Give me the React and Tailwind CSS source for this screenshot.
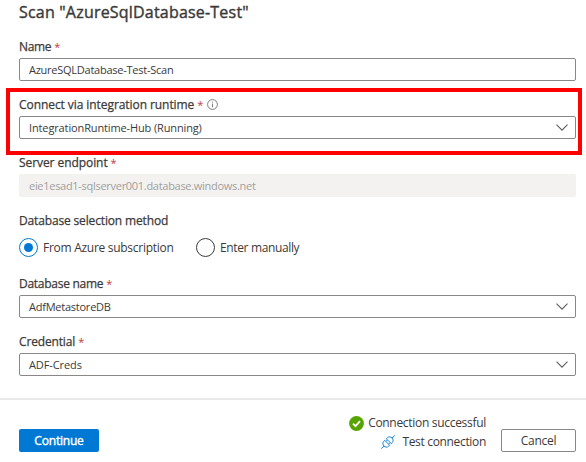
import React from 'react';

function Label({ children, required, info, spacing }) {
  return (
    <div className="flex h-5 items-center pb-[3px] text-[12px] leading-4 text-[#3b3a39]">
      <span className={`whitespace-nowrap [-webkit-text-stroke:0.25px_#3b3a39] ${spacing}`}>{children}</span>
      {required && <span className="ml-[3px] text-[11px] leading-4 text-[#c0383d]">*</span>}
      {info && (
        <svg className="ml-[4px] size-[11px]" viewBox="0 0 11 11" fill="none" stroke="#605e5c" strokeWidth="0.8">
          <circle cx="5.5" cy="5.5" r="4.9" />
          <path d="M5.5 4.6v3.6M5.5 2.6v1" />
        </svg>
      )}
    </div>
  );
}

function Chevron() {
  return (
    <svg className="mr-[7px] h-[7px] w-3 shrink-0" viewBox="0 0 12 7" fill="none" stroke="#605e5c" strokeWidth="1.1">
      <path d="M0.5 0.6L6 6.1L11.5 0.6" />
    </svg>
  );
}

function Field({ label, info, labelSpacing, value, spacing, select, disabled }) {
  const box = disabled ? 'border-[#f3f2f1] bg-[#f3f2f1] text-[#a19f9d]' : 'border-[#8a8886] bg-white text-[#3b3a39]';
  return (
    <div className="mb-[15px]">
      <Label required info={info} spacing={labelSpacing}>{label}</Label>
      <div className={`flex h-[23px] items-center justify-between rounded-[2px] border pl-[9px] text-[11px] leading-4 ${box}`}>
        <span className={`whitespace-nowrap ${spacing}`}>{value}</span>
        {select && <Chevron />}
      </div>
    </div>
  );
}

export default function App() {
  return (
    <div className="h-[462px] w-[586px] overflow-hidden bg-white font-['Open_Sans','Noto_Sans',sans-serif] text-[#3b3a39]">
      <div className="relative h-[398px] pl-[19px] pr-[10px]">
        <h1 className="h-[38px] whitespace-nowrap text-[16px] leading-6 tracking-[0.2px] [-webkit-text-stroke:0.4px_#3b3a39]">Scan "AzureSqlDatabase-Test"</h1>
        <Field label="Name" labelSpacing="tracking-[-0.35px]" value="AzureSQLDatabase-Test-Scan" spacing="tracking-[-0.25px]" />
        <Field label="Connect via integration runtime" labelSpacing="tracking-[-0.07px]" info select value="IntegrationRuntime-Hub (Running)" spacing="tracking-[-0.13px]" />
        <Field label="Server endpoint" labelSpacing="tracking-[-0.07px]" disabled value="eie1esad1-sqlserver001.database.windows.net" spacing="tracking-[-0.29px]" />
        <Label spacing="tracking-[-0.15px]">Database selection method</Label>
        <div className="flex h-[43px] items-start pt-1.5 text-[12px] leading-[19px]">
          <span className="flex size-[19px] shrink-0 items-center justify-center rounded-full border border-[#0078d4]">
            <span className="size-[9px] rounded-full bg-[#0078d4]" />
          </span>
          <span className="ml-[5px] w-[153px] whitespace-nowrap tracking-[-0.28px]">From Azure subscription</span>
          <span className="size-[19px] shrink-0 rounded-full border border-[#3b3a39]" />
          <span className="ml-[5px] whitespace-nowrap tracking-[-0.36px]">Enter manually</span>
        </div>
        <Field label="Database name" labelSpacing="tracking-[-0.27px]" select value="AdfMetastoreDB" spacing="tracking-[-0.24px]" />
        <Field label="Credential" labelSpacing="tracking-[-0.15px]" select value="ADF-Creds" spacing="tracking-[-0.1px]" />
        <div className="pointer-events-none absolute left-[6px] top-[88px] h-[67px] w-[576px] border-4 border-[#ff0000]" />
      </div>
      <footer className="flex h-16 items-start border-t-2 border-[#eaeaea] pl-[19px] pr-[10px]">
        <button className="mt-[29px] h-[23px] w-20 rounded-[2px] bg-[#0078d4] text-[12px] leading-4 tracking-[-0.2px] text-white [-webkit-text-stroke:0.4px_#fff]">Continue</button>
        <div className="ml-auto mr-[15px] flex flex-col items-end pt-[14px] text-[12px] leading-[18px]">
          <div className="flex items-center">
            <svg className="mr-1 size-[15px]" viewBox="0 0 15 15">
              <circle cx="7.5" cy="7.5" r="7.4" fill="#57a300" />
              <path d="M4 7.6l2.5 2.5L11 5.2" fill="none" stroke="#fff" strokeWidth="1.8" />
            </svg>
            <span className="whitespace-nowrap tracking-[-0.3px]">Connection successful</span>
          </div>
          <div className="mt-px flex items-center">
            <svg className="mr-[7px] size-[14px]" viewBox="0 0 14 14" fill="none" stroke="#0078d4" strokeWidth="0.9">
              <path d="M0.3 13.7L3 11M11 3L13.7 0.3" />
              <path d="M3.7 5.3L8.7 10.3L7.5 11.3C6 12.6 4.2 12.3 3 11C1.7 9.8 1.4 8 2.7 6.5Z" />
              <path d="M5.3 3.7L10.3 8.7L11.3 7.5C12.6 6 12.3 4.2 11 3C9.8 1.7 8 1.4 6.5 2.7Z" />
              <path d="M4.9 6.5L6.5 4.9M7.5 9.1L9.1 7.5" />
            </svg>
            <span className="whitespace-nowrap tracking-[-0.33px]">Test connection</span>
          </div>
        </div>
        <button className="mt-[29px] h-[23px] w-[75px] rounded-[2px] border border-[#8a8886] bg-white text-[12px] leading-4 tracking-[-0.25px]">Cancel</button>
      </footer>
    </div>
  );
}
